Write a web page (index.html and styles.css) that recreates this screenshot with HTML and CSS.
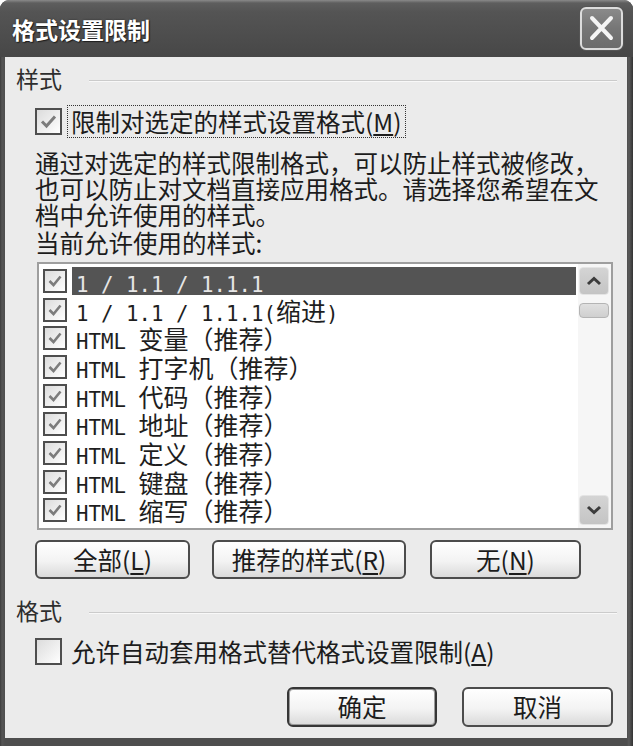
FILE: index.html
```html
<!DOCTYPE html>
<html lang="zh-CN">
<head>
<meta charset="utf-8">
<title>格式设置限制</title>
<link rel="stylesheet" href="styles.css">
</head>
<body>
<div class="window">
  <div class="titlebar">
    <span class="title">格式设置限制</span>
    <span class="close">
      <svg width="39" height="39" viewBox="0 0 39 39"><path d="M10 9 L29 29 M29 9 L10 29" stroke="#f4f4f4" stroke-width="4" stroke-linecap="round" fill="none"/></svg>
    </span>
  </div>
  <div class="client">
    <div class="group-head"><span class="glabel">样式</span><span class="rule"></span></div>
    <div class="check-row first">
      <span class="cb"><svg viewBox="0 0 23 23"><path d="M5 11.5 L9.5 16 L18 6.5" stroke="#7c7c7c" stroke-width="3" fill="none"/></svg></span>
      <span class="clabel focus">限制对选定的样式设置格式(<u>M</u>)</span>
    </div>
    <p class="desc">通过对选定的样式限制格式，可以防止样式被修改，也可以防止对文档直接应用格式。请选择您希望在文档中允许使用的样式。</p>
    <div class="cap">当前允许使用的样式:</div>
    <div class="list">
      <div class="items">
        <div class="item sel"><span class="cb sm"><svg viewBox="0 0 20 20"><path d="M4.5 10 L8.5 14 L15.5 5.5" stroke="#7c7c7c" stroke-width="2.6" fill="none"/></svg></span><span class="txt"><span class="en">1 / 1.1 / 1.1.1</span></span></div>
        <div class="item"><span class="cb sm"><svg viewBox="0 0 20 20"><path d="M4.5 10 L8.5 14 L15.5 5.5" stroke="#7c7c7c" stroke-width="2.6" fill="none"/></svg></span><span class="txt"><span class="en">1 / 1.1 / 1.1.1(</span>缩进<span class="en">)</span></span></div>
        <div class="item"><span class="cb sm"><svg viewBox="0 0 20 20"><path d="M4.5 10 L8.5 14 L15.5 5.5" stroke="#7c7c7c" stroke-width="2.6" fill="none"/></svg></span><span class="txt"><span class="en">HTML </span>变量（推荐）</span></div>
        <div class="item"><span class="cb sm"><svg viewBox="0 0 20 20"><path d="M4.5 10 L8.5 14 L15.5 5.5" stroke="#7c7c7c" stroke-width="2.6" fill="none"/></svg></span><span class="txt"><span class="en">HTML </span>打字机（推荐）</span></div>
        <div class="item"><span class="cb sm"><svg viewBox="0 0 20 20"><path d="M4.5 10 L8.5 14 L15.5 5.5" stroke="#7c7c7c" stroke-width="2.6" fill="none"/></svg></span><span class="txt"><span class="en">HTML </span>代码（推荐）</span></div>
        <div class="item"><span class="cb sm"><svg viewBox="0 0 20 20"><path d="M4.5 10 L8.5 14 L15.5 5.5" stroke="#7c7c7c" stroke-width="2.6" fill="none"/></svg></span><span class="txt"><span class="en">HTML </span>地址（推荐）</span></div>
        <div class="item"><span class="cb sm"><svg viewBox="0 0 20 20"><path d="M4.5 10 L8.5 14 L15.5 5.5" stroke="#7c7c7c" stroke-width="2.6" fill="none"/></svg></span><span class="txt"><span class="en">HTML </span>定义（推荐）</span></div>
        <div class="item"><span class="cb sm"><svg viewBox="0 0 20 20"><path d="M4.5 10 L8.5 14 L15.5 5.5" stroke="#7c7c7c" stroke-width="2.6" fill="none"/></svg></span><span class="txt"><span class="en">HTML </span>键盘（推荐）</span></div>
        <div class="item"><span class="cb sm"><svg viewBox="0 0 20 20"><path d="M4.5 10 L8.5 14 L15.5 5.5" stroke="#7c7c7c" stroke-width="2.6" fill="none"/></svg></span><span class="txt"><span class="en">HTML </span>缩写（推荐）</span></div>
      </div>
      <div class="scrollbar">
        <div class="sbtn up"><svg width="16" height="10" viewBox="0 0 16 10"><path d="M2 8 L8 2.5 L14 8" stroke="#3c3c3c" stroke-width="3" fill="none"/></svg></div>
        <div class="thumb"></div>
        <div class="track"></div>
        <div class="sbtn down"><svg width="16" height="10" viewBox="0 0 16 10"><path d="M2 2 L8 7.5 L14 2" stroke="#3c3c3c" stroke-width="3" fill="none"/></svg></div>
      </div>
    </div>
    <div class="btn-row">
      <button class="btn b-all">全部(<u>L</u>)</button>
      <button class="btn b-rec">推荐的样式(<u>R</u>)</button>
      <button class="btn b-none">无(<u>N</u>)</button>
    </div>
    <div class="group-head second"><span class="glabel">格式</span><span class="rule"></span></div>
    <div class="check-row second">
      <span class="cb empty"></span>
      <span class="clabel">允许自动套用格式替代格式设置限制(<u>A</u>)</span>
    </div>
    <div class="dlg-btns">
      <button class="btn b-ok">确定</button>
      <button class="btn b-cancel">取消</button>
    </div>
  </div>
</div>
</body>
</html>
```

FILE: styles.css
```css
* { box-sizing: border-box; }
html, body { margin: 0; padding: 0; }
body {
  background: #ffffff;
  font-family: "Noto Sans CJK SC", "Noto Sans", sans-serif;
  color: #1c1c1c;
}
.window {
  width: 633px;
  height: 746px;
  background: linear-gradient(to right, #3c3c3c 0, #555 2px, #4e4e4e 5px, #4e4e4e 627px, #5a5a5a 629px, #333 633px);
  border-radius: 9px 9px 0 0;
  display: flex;
  flex-direction: column;
  overflow: hidden;
}
.titlebar {
  height: 57px;
  flex: none;
  display: flex;
  align-items: center;
  justify-content: space-between;
  padding: 0 10px 0 12px;
  background: linear-gradient(to bottom, #8a8a8a 0, #5e5e5e 3px, #545454 12px, #4c4c4c 40px, #474747 57px);
}
.title {
  color: #ffffff;
  font-weight: bold;
  font-size: 23px;
  line-height: 28px;
  text-shadow: 1px 1px 1px #1e1e1e, 0 0 2px #2a2a2a;
}
.close {
  width: 43px;
  height: 43px;
  border: 2px solid #dcdcdc;
  border-radius: 6px;
  background: linear-gradient(to bottom, #8a8a8a, #767676 50%, #6c6c6c);
  display: flex;
  align-items: center;
  justify-content: center;
  box-shadow: 0 0 0 1px #555;
}
.client {
  flex: none;
  height: 681px;
  margin: 0 6px 8px 5px;
  background: #ebebeb;
  display: flex;
  flex-direction: column;
  font-size: 24.5px;
}
.group-head {
  margin-top: 9px;
  padding-left: 11px;
  display: flex;
  align-items: center;
  height: 25px;
}
.group-head.second { margin-top: 19px; }
.glabel {
  font-size: 23px;
  line-height: 25px;
  color: #2e2e2e;
}
.rule {
  flex: 1;
  margin: 5px 10px 0 27px;
  height: 2px;
  border-top: 1px solid #cbcbcb;
  border-bottom: 1px solid #f8f8f8;
}
.check-row {
  display: flex;
  align-items: center;
  margin-top: 15px;
  padding-left: 30px;
  height: 31px;
}
.check-row.second { margin-top: 13px; }
.cb {
  width: 27px;
  height: 27px;
  flex: none;
  border: 2px solid #4e4e4e;
  background: linear-gradient(135deg, #dcdcdc, #f4f4f4 70%, #ffffff);
  display: flex;
  align-items: center;
  justify-content: center;
}
.cb svg { width: 23px; height: 23px; }
.cb.sm {
  width: 24px;
  height: 24px;
  border-width: 2px;
}
.cb.sm svg { width: 20px; height: 20px; }
.clabel {
  margin-left: 6px;
  padding: 0 3px;
  font-size: 24.5px;
  line-height: 27px;
  white-space: nowrap;
}
.clabel.focus {
  padding: 2px 4px 2px 3px;
  outline: 1px dotted #333;
  outline-offset: 0;
}
.desc {
  margin: 13px 0 0 30px;
  width: 572px;
  font-size: 24.5px;
  line-height: 26px;
}
.cap {
  margin: 2px 0 0 30px;
  font-size: 24.5px;
  line-height: 26px;
}
.list {
  margin: 6px 0 0 32px;
  width: 576px;
  height: 268px;
  border: 2px solid #9e9e9e;
  background: #ffffff;
  display: flex;
}
.items {
  flex: 1;
  padding-top: 2.5px;
}
.item {
  height: 28.7px;
  display: flex;
  align-items: center;
  padding-left: 4px;
  padding-right: 2px;
}
.txt {
  flex: 1;
  margin-left: 5px;
  padding-left: 4px;
  height: 28px;
  line-height: 28px;
  font-size: 25px;
  white-space: nowrap;
  color: #1e1e1e;
}
.item.sel .txt {
  background: #545454;
  color: #e6e6e6;
}
.en {
  font-family: "DejaVu Sans Mono", "Liberation Mono", monospace;
  font-size: 20.76px;
  white-space: pre;
}
.scrollbar {
  width: 33px;
  flex: none;
  background: #f6f6f6;
  padding: 3px 2px 3px 1px;
  display: flex;
  flex-direction: column;
}
.sbtn {
  border: 1px solid #e4e4e4;
  border-radius: 4px;
  background: linear-gradient(to bottom, #d4d4d4, #c4c4c4);
  display: flex;
  align-items: center;
  justify-content: center;
}
.sbtn.up { height: 28px; }
.sbtn.down { height: 30px; }
.thumb {
  margin-top: 8px;
  height: 15px;
  border: 1px solid #b4b4b4;
  border-radius: 4px;
  background: linear-gradient(to bottom, #e0e0e0, #cfcfcf);
}
.track { flex: 1; }
.btn {
  font-family: "Noto Sans CJK SC", "Noto Sans", sans-serif;
  font-size: 24.5px;
  color: #1c1c1c;
  border: 2px solid #4c4c4c;
  border-radius: 6px;
  background: linear-gradient(to bottom, #ffffff, #f3f3f3 55%, #dadada);
  padding: 0;
  line-height: 30px;
}
.btn u { text-underline-offset: 3px; }
.btn-row {
  display: flex;
  margin-top: 10px;
  padding-left: 30px;
  height: 39px;
}
.b-all { width: 155px; }
.b-rec { width: 194px; margin-left: 22px; }
.b-none { width: 151px; margin-left: 24px; }
.dlg-btns {
  display: flex;
  justify-content: flex-end;
  margin-top: 20px;
  padding-right: 14px;
  height: 40px;
}
.b-ok {
  width: 150px;
  border-color: #363636;
  box-shadow: inset 0 0 0 1px #9a9a9a;
}
.b-cancel { width: 151px; margin-left: 25px; }
```
